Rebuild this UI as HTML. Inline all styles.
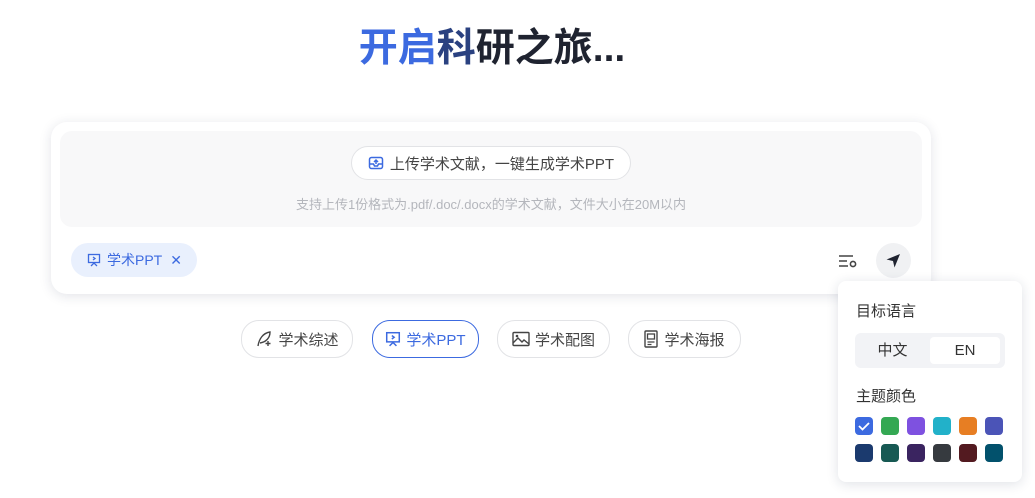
<!DOCTYPE html>
<html><head><meta charset="utf-8"><style>
*{box-sizing:border-box;margin:0;padding:0}
body{width:1035px;height:498px;background:#fff;font-family:"Liberation Sans","Noto Sans CJK SC",sans-serif;position:relative;overflow:hidden;color:#333}
.abs{position:absolute}
h1{position:absolute;left:0;width:984px;top:25px;text-align:center;font-size:39px;font-weight:700;color:#1f2330;line-height:48px}
.card{left:51px;top:122px;width:880px;height:172px;border-radius:16px;background:#fff;box-shadow:0 2px 12px rgba(30,40,80,.13)}
.inner{left:9px;top:9px;width:862px;height:96px;border-radius:12px;background:#f8f8f9}
.pill{display:flex;align-items:center;justify-content:center;border:1px solid #e2e3e6;border-radius:18px;background:#fff;font-size:15px;color:#333}
.sw{position:absolute;width:18px;height:18px;border-radius:4px}
</style></head><body>
<h1><span style="color:#3c6ae0">开启</span><span style="color:#2a4180">科</span>研之旅...</h1>
<div class="abs card">
 <div class="abs inner">
  <div class="abs pill" style="left:291px;top:15px;width:280px;height:34px;color:#444">
   <svg width="16" height="16" viewBox="0 0 16 16" style="margin-right:6px"><rect x="1.5" y="2.5" width="13" height="11" rx="2" fill="none" stroke="#3c6ae0" stroke-width="1.5"/><path d="M1.5 9h4l1 2h3l1-2h4" fill="none" stroke="#3c6ae0" stroke-width="1.5"/><path d="M8 9V5M6 7l2-2 2 2" fill="none" stroke="#3c6ae0" stroke-width="1.5"/></svg>上传学术文献，一键生成学术PPT</div>
  <div class="abs" style="left:0;width:862px;top:63px;text-align:center;font-size:13px;color:#b4b6bc">支持上传1份格式为.pdf/.doc/.docx的学术文献，文件大小在20M以内</div>
 </div>
 <div class="abs" style="left:20px;top:121px;width:126px;height:34px;border-radius:17px;background:#e9f0fd;display:flex;align-items:center;padding-left:16px;font-size:14px;color:#3c6ae0">
  <svg width="14" height="14" viewBox="0 0 14 14" style="margin-right:6px"><rect x="1.5" y="1.5" width="11" height="8" fill="none" stroke="#3c6ae0" stroke-width="1.3"/><path d="M6 4l2 1.5L6 7M4 13l3-3 3 3" fill="none" stroke="#3c6ae0" stroke-width="1.3"/></svg>学术PPT<span style="margin-left:8px;font-size:14px">✕</span></div>
 <svg class="abs" style="left:787px;top:132px" width="20" height="14" viewBox="0 0 20 14"><path d="M1 2h14M1 7h8M1 12h9" stroke="#444" stroke-width="1.4"/><circle cx="15" cy="10" r="2.6" fill="none" stroke="#444" stroke-width="1.6"/></svg>
 <div class="abs" style="left:825px;top:121px;width:35px;height:35px;border-radius:50%;background:#f0f1f3"></div>
 <svg class="abs" style="left:834px;top:130px" width="17" height="17" viewBox="0 0 17 17"><path d="M15 2L1.5 7.5 8 9l1.5 6.5z" fill="#1f2330"/></svg>
</div>
<div class="abs pill" style="left:241px;top:320px;width:112px;height:38px;color:#444"><svg width="18" height="18" viewBox="0 0 18 18" style="margin-right:5px"><path d="M3 16C4 9 8 3 15 2c0 6-4 10-10 11" fill="none" stroke="#444" stroke-width="1.4"/><path d="M13 11v5M10.5 13.5h5" stroke="#444" stroke-width="1.4"/></svg>学术综述</div>
<div class="abs pill" style="left:372px;top:320px;width:107px;height:38px;border-color:#3c6ae0;color:#3c6ae0"><svg width="16" height="16" viewBox="0 0 14 14" style="margin-right:5px"><rect x="1.5" y="1.5" width="11" height="8" fill="none" stroke="#3c6ae0" stroke-width="1.3"/><path d="M6 4l2 1.5L6 7M4 13l3-3 3 3" fill="none" stroke="#3c6ae0" stroke-width="1.3"/></svg>学术PPT</div>
<div class="abs pill" style="left:497px;top:320px;width:113px;height:38px;color:#444"><svg width="18" height="16" viewBox="0 0 18 16" style="margin-right:5px"><rect x="1" y="1.5" width="16" height="13" rx="1" fill="none" stroke="#444" stroke-width="1.4"/><path d="M1 12l5-5 4 4 2-2 5 4" fill="none" stroke="#444" stroke-width="1.4"/><circle cx="5" cy="5" r="1.3" fill="#444"/></svg>学术配图</div>
<div class="abs pill" style="left:628px;top:320px;width:113px;height:38px;color:#444"><svg width="14" height="18" viewBox="0 0 14 18" style="margin-right:6px"><rect x="1" y="1" width="12" height="16" rx="1" fill="none" stroke="#444" stroke-width="1.4"/><rect x="3.5" y="4" width="7" height="5" fill="none" stroke="#444" stroke-width="1.3"/><path d="M3.5 12h7M3.5 14.5h4" stroke="#444" stroke-width="1.3"/></svg>学术海报</div>

<div class="abs" style="left:838px;top:281px;width:184px;height:201px;border-radius:8px;background:#fff;box-shadow:0 2px 12px rgba(30,40,80,.14)">
 <div class="abs" style="left:18px;top:19px;font-size:15px;color:#333">目标语言</div>
 <div class="abs" style="left:17px;top:52px;width:150px;height:35px;border-radius:6px;background:#f2f3f6">
  <div class="abs" style="left:0;width:75px;top:0;line-height:35px;text-align:center;font-size:15px;color:#333">中文</div>
  <div class="abs" style="left:75px;top:4px;width:70px;height:27px;border-radius:4px;background:#fff;line-height:27px;text-align:center;font-size:15px;color:#333">EN</div>
 </div>
 <div class="abs" style="left:18px;top:104px;font-size:15px;color:#333">主题颜色</div>
 <div class="sw" style="left:17px;top:136px;background:#3c6ae0"><svg width="18" height="18"><path d="M4 9l3.5 3.5L14 6" fill="none" stroke="#fff" stroke-width="1.8"/></svg></div>
 <div class="sw" style="left:43px;top:136px;background:#34a853"></div>
 <div class="sw" style="left:69px;top:136px;background:#7e51e0"></div>
 <div class="sw" style="left:95px;top:136px;background:#22b1c9"></div>
 <div class="sw" style="left:121px;top:136px;background:#e77e23"></div>
 <div class="sw" style="left:147px;top:136px;background:#4b54b7"></div>
 <div class="sw" style="left:17px;top:163px;background:#1b3a6e"></div>
 <div class="sw" style="left:43px;top:163px;background:#175953"></div>
 <div class="sw" style="left:69px;top:163px;background:#3a2460"></div>
 <div class="sw" style="left:95px;top:163px;background:#363a3f"></div>
 <div class="sw" style="left:121px;top:163px;background:#531a20"></div>
 <div class="sw" style="left:147px;top:163px;background:#02516c"></div>
</div>
</body></html>
